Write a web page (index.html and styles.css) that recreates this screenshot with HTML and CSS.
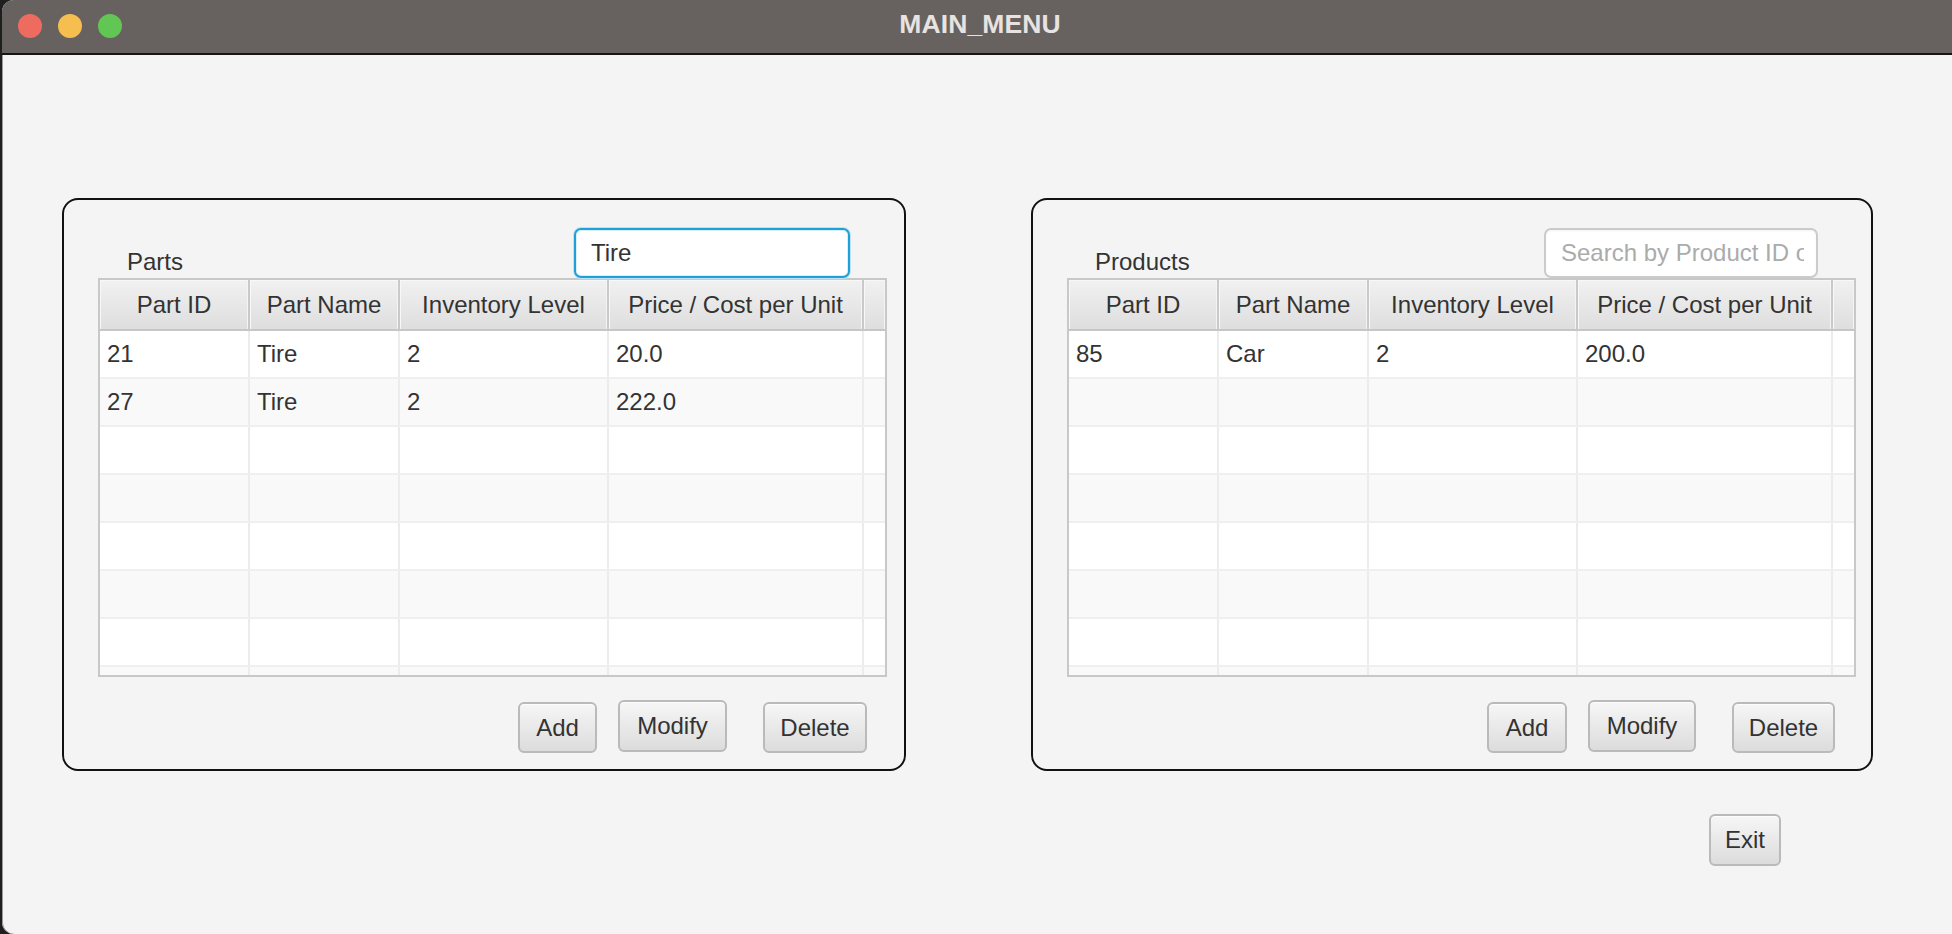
FILE: index.html
```html
<!DOCTYPE html>
<html>
<head>
<meta charset="utf-8">
<title>MAIN_MENU</title>
<link rel="stylesheet" href="styles.css">
</head>
<body>
<div class="window">
  <header class="titlebar">
    <div class="lights">
      <span class="light red"></span>
      <span class="light yellow"></span>
      <span class="light green"></span>
    </div>
    <div class="title">MAIN_MENU</div>
    <div></div>
  </header>
  <main class="content">
    <div class="panels">
      <section class="panel panel-parts">
        <div class="panel-head">
          <span class="panel-label">Parts</span>
          <div class="field focused"><span class="field-text">Tire</span></div>
        </div>
        <div class="table">
          <div class="row head">
            <div class="cell">Part ID</div><div class="cell">Part Name</div><div class="cell">Inventory Level</div><div class="cell">Price / Cost per Unit</div><div class="cell"></div>
          </div>
          <div class="row"><div class="cell">21</div><div class="cell">Tire</div><div class="cell">2</div><div class="cell">20.0</div><div class="cell"></div></div>
          <div class="row alt"><div class="cell">27</div><div class="cell">Tire</div><div class="cell">2</div><div class="cell">222.0</div><div class="cell"></div></div>
          <div class="row"><div class="cell"></div><div class="cell"></div><div class="cell"></div><div class="cell"></div><div class="cell"></div></div>
          <div class="row alt"><div class="cell"></div><div class="cell"></div><div class="cell"></div><div class="cell"></div><div class="cell"></div></div>
          <div class="row"><div class="cell"></div><div class="cell"></div><div class="cell"></div><div class="cell"></div><div class="cell"></div></div>
          <div class="row alt"><div class="cell"></div><div class="cell"></div><div class="cell"></div><div class="cell"></div><div class="cell"></div></div>
          <div class="row"><div class="cell"></div><div class="cell"></div><div class="cell"></div><div class="cell"></div><div class="cell"></div></div>
          <div class="row alt"><div class="cell"></div><div class="cell"></div><div class="cell"></div><div class="cell"></div><div class="cell"></div></div>
        </div>
        <div class="actions">
          <button class="btn btn-add">Add</button>
          <button class="btn btn-modify">Modify</button>
          <button class="btn btn-delete">Delete</button>
        </div>
      </section>
      <section class="panel panel-products">
        <div class="panel-head">
          <span class="panel-label">Products</span>
          <div class="field"><span class="field-text placeholder">Search by Product ID or Name</span></div>
        </div>
        <div class="table">
          <div class="row head">
            <div class="cell">Part ID</div><div class="cell">Part Name</div><div class="cell">Inventory Level</div><div class="cell">Price / Cost per Unit</div><div class="cell"></div>
          </div>
          <div class="row"><div class="cell">85</div><div class="cell">Car</div><div class="cell">2</div><div class="cell">200.0</div><div class="cell"></div></div>
          <div class="row alt"><div class="cell"></div><div class="cell"></div><div class="cell"></div><div class="cell"></div><div class="cell"></div></div>
          <div class="row"><div class="cell"></div><div class="cell"></div><div class="cell"></div><div class="cell"></div><div class="cell"></div></div>
          <div class="row alt"><div class="cell"></div><div class="cell"></div><div class="cell"></div><div class="cell"></div><div class="cell"></div></div>
          <div class="row"><div class="cell"></div><div class="cell"></div><div class="cell"></div><div class="cell"></div><div class="cell"></div></div>
          <div class="row alt"><div class="cell"></div><div class="cell"></div><div class="cell"></div><div class="cell"></div><div class="cell"></div></div>
          <div class="row"><div class="cell"></div><div class="cell"></div><div class="cell"></div><div class="cell"></div><div class="cell"></div></div>
          <div class="row alt"><div class="cell"></div><div class="cell"></div><div class="cell"></div><div class="cell"></div><div class="cell"></div></div>
        </div>
        <div class="actions">
          <button class="btn btn-add2">Add</button>
          <button class="btn btn-modify2">Modify</button>
          <button class="btn btn-delete2">Delete</button>
        </div>
      </section>
    </div>
    <div class="footer">
      <button class="btn btn-exit">Exit</button>
    </div>
  </main>
</div>
</body>
</html>
```

FILE: styles.css
```css
* { box-sizing: border-box; }

html, body {
  margin: 0;
  padding: 0;
  width: 1952px;
  height: 934px;
  overflow: hidden;
  background: #1f1f1f;
  font-family: "Liberation Sans", Arial, sans-serif;
}

.window {
  margin-left: 2px;
  width: 1950px;
  height: 934px;
  background: #f4f4f4;
  border-radius: 12px 0 0 12px;
  overflow: hidden;
  box-shadow: inset 1px 0 0 #9a9a9a;
}

.titlebar {
  height: 55px;
  background: #67625f;
  border-bottom: 2px solid #151515;
  display: grid;
  grid-template-columns: 1fr auto 1fr;
  align-items: start;
}

.lights {
  display: flex;
  gap: 16px;
  padding: 14px 0 0 16px;
}

.light {
  width: 24px;
  height: 24px;
  border-radius: 50%;
  display: block;
}
.red { background: #ee6b60; }
.yellow { background: #f6be4f; }
.green { background: #62c655; }

.title {
  color: #e8e3e0;
  font-weight: bold;
  font-size: 26.5px;
  line-height: 48px;
  padding-left: 6px;
  letter-spacing: 0.1px;
}

.content {
  padding-top: 143px;
}

.panels {
  display: flex;
  padding-left: 60px;
  gap: 125px;
}

.panel {
  border: 2px solid #111;
  border-radius: 16px;
  height: 573px;
  padding: 28px 0 0 34px;
}
.panel-parts { width: 844px; }
.panel-products { width: 842px; padding-left: 34px; }

.panel-head {
  width: 789px;
  height: 50px;
  display: flex;
  justify-content: space-between;
  align-items: flex-end;
}

.panel-label {
  font-size: 24px;
  line-height: 28px;
  color: #333;
  margin: 0 0 2px 29px;
}
.panel-products .panel-label { margin-left: 28px; }

.field {
  width: 276px;
  height: 50px;
  margin-right: 37px;
  border: 2px solid #cbcbcb;
  border-radius: 7px;
  background: #fff;
  padding: 0 12px 0 15px;
  display: flex;
  align-items: center;
  box-shadow: inset 0 1px 2px rgba(0,0,0,0.06);
}
.panel-products .field { width: 274px; margin-right: 38px; }

.field.focused {
  border-color: #1fa0d8;
  box-shadow: 0 0 0 1px #bfe3f4, inset 0 0 0 1px #d9eff9;
}

.field-text {
  display: block;
  overflow: hidden;
  white-space: nowrap;
  font-size: 24px;
  line-height: 28px;
  color: #333;
}
.field-text.placeholder { color: #ababab; }

.table {
  width: 789px;
  height: 399px;
  border: 2px solid #c8c8c8;
  background: #fff;
  overflow: hidden;
}

.row {
  display: grid;
  grid-template-columns: 150px 150px 209px 255px 1fr;
  height: 48px;
  background: #fff;
  border-bottom: 2px solid #efefef;
}
.row.alt { background: #f9f9f9; }

.cell {
  border-right: 2px solid #ececec;
  font-size: 24px;
  line-height: 46px;
  color: #333;
  padding-left: 7px;
  white-space: nowrap;
  overflow: hidden;
}
.cell:last-child { border-right: none; }

.row.head {
  height: 51px;
  border-bottom: 2px solid #c6c6c6;
  background: #e4e4e4;
}
.row.head .cell {
  background: linear-gradient(#f1f1f1, #dedede);
  border-right: 2px solid #c9c9c9;
  box-shadow: inset 1px 1px 0 #f8f8f8, inset -1px 0 0 #f4f4f4;
  text-align: center;
  padding-left: 0;
  line-height: 49px;
}
.row.head .cell:last-child { border-right: none; }

.actions {
  display: flex;
  justify-content: flex-end;
  align-items: flex-start;
  width: 789px;
  padding-right: 20px;
  margin-top: 23px;
}
.panel-products .actions { padding-right: 21px; }

.btn {
  font-family: "Liberation Sans", Arial, sans-serif;
  font-size: 24px;
  color: #333;
  height: 51px;
  border: 2px solid #bababa;
  border-radius: 6px;
  background: linear-gradient(#f6f6f6, #dcdcdc);
  box-shadow: inset 0 1px 0 #fdfdfd;
  padding: 0;
  line-height: 46px;
  text-align: center;
}

.btn-add, .btn-add2, .btn-delete, .btn-delete2 { margin-top: 2px; line-height: 48px; }
.btn-add { width: 79px; }
.btn-modify { width: 109px; margin-left: 21px; height: 52px; }
.btn-delete { width: 104px; margin-left: 36px; }
.btn-add2 { width: 80px; }
.btn-modify2 { width: 108px; margin-left: 21px; height: 52px; }
.btn-delete2 { width: 103px; margin-left: 36px; }

.footer {
  display: flex;
  justify-content: flex-end;
  padding-right: 171px;
  margin-top: 43px;
}
.btn-exit { width: 72px; height: 52px; line-height: 48px; }
```
